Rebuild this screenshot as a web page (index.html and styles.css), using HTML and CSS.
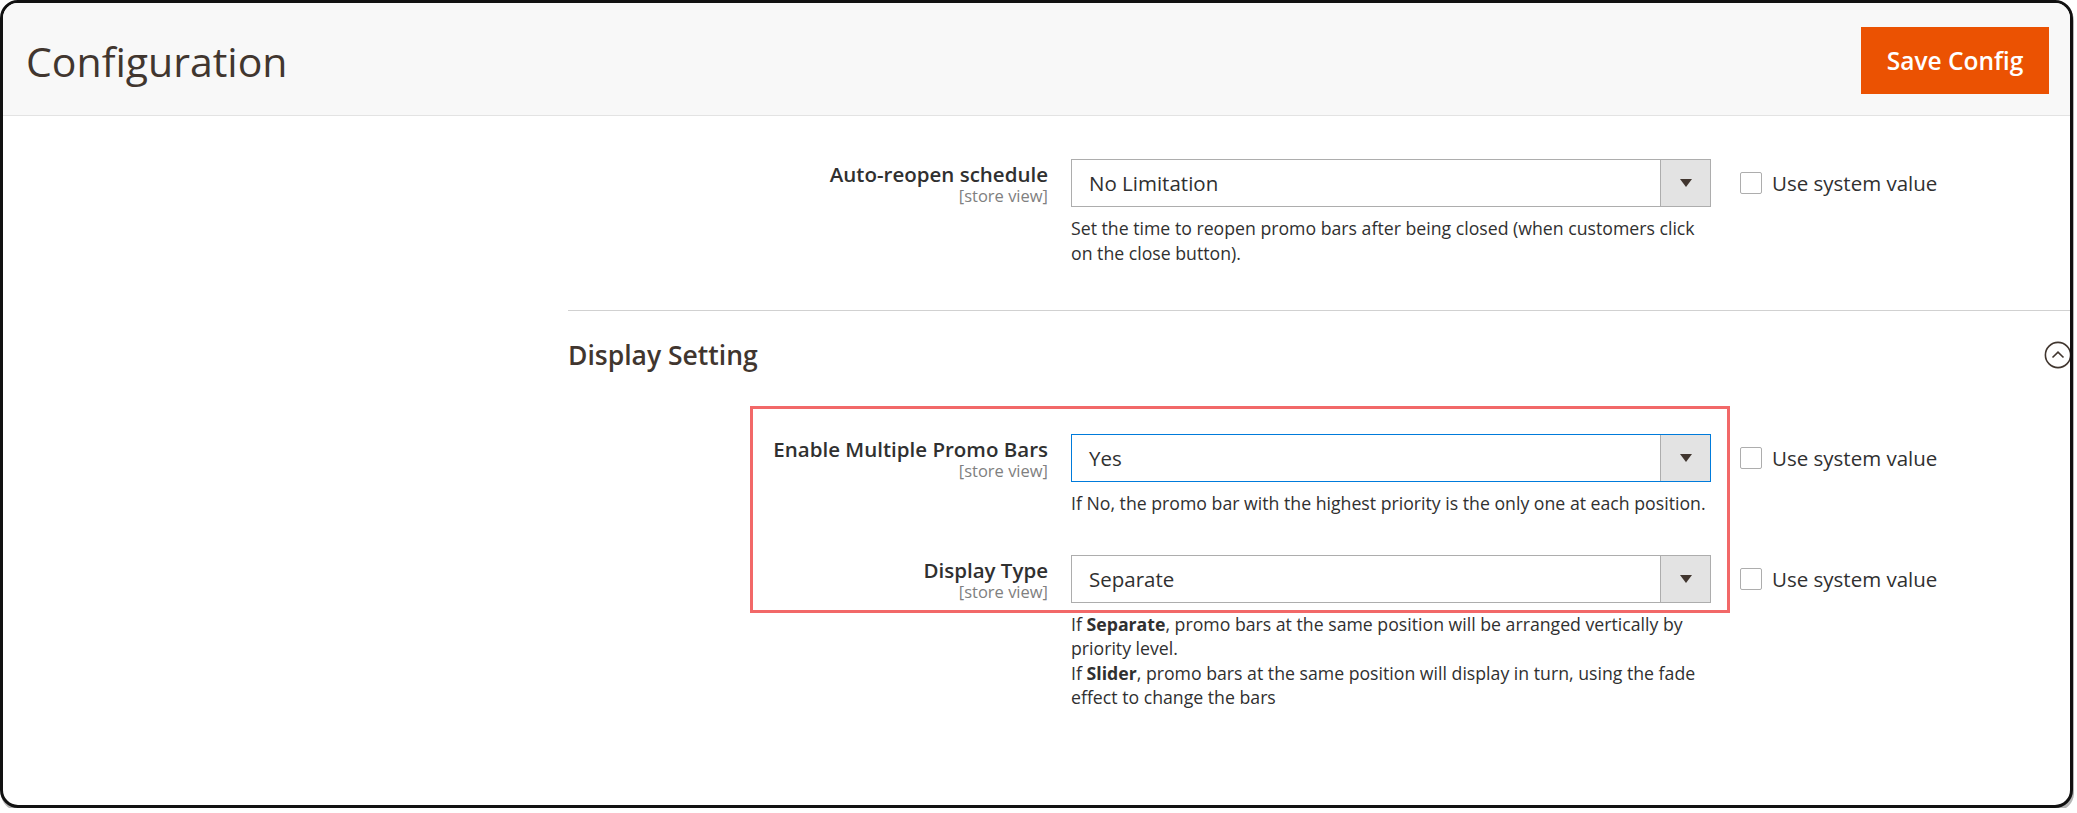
FILE: index.html
```html
<!DOCTYPE html>
<html lang="en">
<head>
    <meta charset="UTF-8">
    <meta name="viewport" content="width=device-width, initial-scale=1.0">
    <title>Configuration</title>
    <link rel="stylesheet" href="styles.css">
</head>
<body>
    <div class="frame">
        <header class="page-header">
            <h1>Configuration</h1>
            <button type="button" class="btn-save">Save Config</button>
        </header>

        <div class="page-body">
            <aside class="side"></aside>

            <main class="main">
                <div class="row row-first">
                    <div class="label">
                        <span class="label-text">Auto-reopen schedule</span>
                        <span class="scope">[store view]</span>
                    </div>
                    <div class="control">
                        <div class="select">
                            <span class="select-value">No Limitation</span>
                            <span class="select-arrow"></span>
                        </div>
                        <p class="note">Set the time to reopen promo bars after being closed (when customers click on the close button).</p>
                    </div>
                    <label class="use-default"><span class="check"></span>Use system value</label>
                </div>

                <section class="group">
                    <div class="group-head">
                        <h2>Display Setting</h2>
                        <span class="toggle">
                            <svg width="28" height="28" viewBox="0 0 28 28">
                                <circle cx="14" cy="14" r="12.6" fill="none" stroke="#41362f" stroke-width="1.6"/>
                                <polyline points="8.5,16.5 14,11.2 19.5,16.5" fill="none" stroke="#41362f" stroke-width="1.6"/>
                            </svg>
                        </span>
                    </div>

                    <div class="fields">
                        <div class="highlight"></div>

                        <div class="row">
                            <div class="label">
                                <span class="label-text">Enable Multiple Promo Bars</span>
                                <span class="scope">[store view]</span>
                            </div>
                            <div class="control">
                                <div class="select focused">
                                    <span class="select-value">Yes</span>
                                    <span class="select-arrow"></span>
                                </div>
                                <p class="note">If No, the promo bar with the highest priority is the only one at each position.</p>
                            </div>
                            <label class="use-default"><span class="check"></span>Use system value</label>
                        </div>

                        <div class="row">
                            <div class="label">
                                <span class="label-text">Display Type</span>
                                <span class="scope">[store view]</span>
                            </div>
                            <div class="control">
                                <div class="select">
                                    <span class="select-value">Separate</span>
                                    <span class="select-arrow"></span>
                                </div>
                                <p class="note">If <b>Separate</b>, promo bars at the same position will be arranged vertically by priority level.<br>If <b>Slider</b>, promo bars at the same position will display in turn, using the fade effect to change the bars</p>
                            </div>
                            <label class="use-default"><span class="check"></span>Use system value</label>
                        </div>
                    </div>
                </section>
            </main>
        </div>
    </div>
</body>
</html>
```

FILE: styles.css
```css
body {
    margin: 0;
    padding: 0;
    background-color: #fff;
    font-family: "Open Sans", "Liberation Sans", sans-serif;
    color: #303030;
}

.frame {
    box-sizing: border-box;
    width: calc(100% - 4px);
    height: 808px;
    border: 3px solid #111;
    border-radius: 18px;
    overflow: hidden;
    background-color: #fff;
    box-shadow: 1px 3px 0 #b5b5b5;
}

/* header */
.page-header {
    height: 112px;
    background-color: #f8f8f8;
    border-bottom: 1px solid #e3e3e3;
    display: flex;
    align-items: center;
    justify-content: space-between;
    padding: 0 21px 0 23px;
}

.page-header h1 {
    margin: 0;
    padding-top: 4px;
    font-size: 41px;
    font-weight: 400;
    color: #41362f;
}

.btn-save {
    width: 188px;
    height: 67px;
    margin-top: 2px;
    border: none;
    background-color: #eb5202;
    color: #fff;
    font-family: "Open Sans", "Liberation Sans", sans-serif;
    font-size: 24.5px;
    font-weight: 600;
    cursor: pointer;
}

/* body */
.page-body {
    display: flex;
}

.side {
    width: 565px;
    flex-shrink: 0;
}

.main {
    flex: 1;
    padding-top: 43px;
}

.row {
    display: grid;
    grid-template-columns: 480px 640px auto;
    column-gap: 23px;
    align-items: start;
    margin-bottom: 39px;
}

.row-first {
    margin-bottom: 45px;
}

.label {
    text-align: right;
    padding-top: 1px;
}

.label-text {
    display: block;
    font-size: 20.5px;
    font-weight: 600;
    line-height: 28px;
    color: #303030;
}

.scope {
    display: block;
    font-size: 16.5px;
    line-height: 16px;
    color: #808080;
}

.select {
    box-sizing: border-box;
    height: 48px;
    border: 1px solid #adadad;
    display: flex;
    align-items: center;
    background-color: #fff;
}

.select.focused {
    border-color: #007bdb;
}

.select-value {
    flex: 1;
    padding-left: 17px;
    font-size: 20.5px;
    color: #303030;
}

.select-arrow {
    width: 49px;
    height: 100%;
    background-color: #e3e3e3;
    border-left: 1px solid #adadad;
    display: flex;
    align-items: center;
    justify-content: center;
}

.select-arrow::after {
    content: "";
    border-left: 6px solid transparent;
    border-right: 6px solid transparent;
    border-top: 8px solid #41362f;
}

.note {
    margin: 9px -6px 0 0;
    font-size: 17.7px;
    line-height: 24.5px;
    color: #303030;
}

.note b {
    font-weight: 700;
}

.use-default {
    height: 48px;
    margin-left: 6px;
    display: flex;
    align-items: center;
    gap: 10px;
    font-size: 20.5px;
    color: #303030;
}

.check {
    box-sizing: border-box;
    width: 22px;
    height: 22px;
    border: 1px solid #adadad;
    border-radius: 2px;
    background-color: #fff;
}

/* group */
.group {
    border-top: 1px solid #d1d1d1;
}

.group-head {
    display: flex;
    align-items: center;
    justify-content: space-between;
    padding-top: 30px;
}

.group-head h2 {
    margin: 0;
    font-size: 26.5px;
    font-weight: 600;
    line-height: 27px;
    color: #41362f;
}

.toggle {
    display: flex;
    margin-right: -2px;
}

.fields {
    position: relative;
    margin-top: 65px;
}

.highlight {
    position: absolute;
    top: -28px;
    left: 182px;
    box-sizing: border-box;
    width: 980px;
    height: 207px;
    border: 3px solid #f26868;
}
```
